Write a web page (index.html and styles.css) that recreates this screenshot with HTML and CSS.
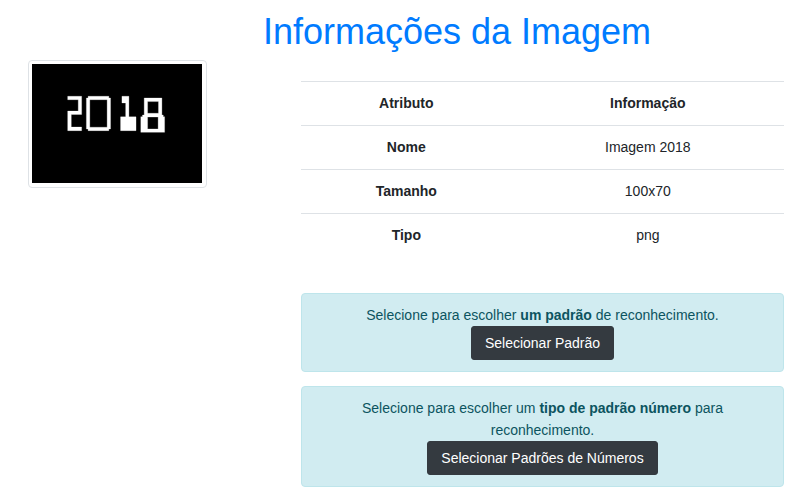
FILE: index.html
```html
<!DOCTYPE html>
<html lang="pt-BR">
<head>
  <meta charset="utf-8">
  <meta name="viewport" content="width=device-width, initial-scale=1">
  <title>Informações da Imagem</title>
  <link rel="stylesheet" href="styles.css">
</head>
<body>
  <main class="page">
    <h1 class="title">Informações da Imagem</h1>
    <div class="layout">
      <figure class="thumbnail">
        <svg class="thumbnail-image" viewBox="0 0 100 70" role="img" aria-label="Imagem 2018">
          <rect width="100" height="70" fill="#000"/>
          <g fill="#fff" fill-rule="evenodd" stroke="#fff" stroke-opacity=".4" stroke-width=".4">
            <path d="M21 19H29.2V29.7H23.1V37.1H29.2V39.2H21V27.7H27.2V21H21Z"/>
            <path d="M33 19H45.2V20H46.2V38.2H45.2V39.2H33V38.2H32V20H33ZM34 21V37.2H44.2V21Z"/>
            <path d="M52.9 19H57V31.1H61.2V39.2H52.1V31.1H55.1V22.9H52.9Z"/>
            <path d="M66 20H76.4V30H77.2V31H78V40.2H64V31H65V30H66ZM68 22.1V29H74.4V22.1ZM68 31.2V38.2H74.2V31.2Z"/>
          </g>
        </svg>
      </figure>
      <div class="details">
        <table class="info">
          <thead>
            <tr><th scope="col">Atributo</th><th scope="col">Informação</th></tr>
          </thead>
          <tbody>
            <tr><th scope="row">Nome</th><td>Imagem 2018</td></tr>
            <tr><th scope="row">Tamanho</th><td>100x70</td></tr>
            <tr><th scope="row">Tipo</th><td>png</td></tr>
          </tbody>
        </table>
        <section class="notice">
          <p class="notice-text">Selecione para escolher <strong>um padrão</strong> de reconhecimento.</p>
          <button class="button" type="button">Selecionar Padrão</button>
        </section>
        <section class="notice">
          <p class="notice-text">Selecione para escolher um <strong>tipo de padrão número</strong> para reconhecimento.</p>
          <button class="button" type="button">Selecionar Padrões de Números</button>
        </section>
      </div>
    </div>
  </main>
</body>
</html>
```
FILE: styles.css
```css
* {
  box-sizing: border-box;
}

body {
  margin: 0;
  background: #fff;
  color: #212529;
  font-family: "Liberation Sans", Arial, sans-serif;
  font-size: 14px;
  line-height: 22px;
}

.page {
  padding: 10px 22px 13px 28px;
}

.title {
  margin: 0 0 7px;
  padding-left: 102px;
  color: #007bff;
  font-size: 36px;
  font-weight: 400;
  line-height: 43px;
  text-align: center;
}

.layout {
  display: grid;
  grid-template-columns: 179fr 483fr;
  column-gap: 94px;
  align-items: start;
}

.thumbnail {
  margin: 0;
  padding: 3px 4px 4px 3px;
  border: 1px solid #dee2e6;
  border-radius: 4px;
  background: #fff;
}

.thumbnail-image {
  display: block;
  width: 100%;
  height: auto;
}

.details {
  display: grid;
  gap: 14px;
  padding-top: 21px;
}

.info {
  width: 100%;
  margin-bottom: 22px;
  border-spacing: 0;
  text-align: center;
}

.info th,
.info td {
  padding: 10px 11px 11px;
  border-top: 1px solid #dee2e6;
}

.notice {
  padding: 10px 18px 11px;
  border: 1px solid #bee5eb;
  border-radius: 4px;
  background: #d1ecf1;
  color: #0c5460;
  text-align: center;
}

.notice-text {
  margin: 0;
}

.button {
  display: block;
  margin: 0 auto;
  padding: 5px 13px;
  border: 1px solid #343a40;
  border-radius: 3px;
  background: #343a40;
  color: #fff;
  font: inherit;
  cursor: pointer;
}
```
